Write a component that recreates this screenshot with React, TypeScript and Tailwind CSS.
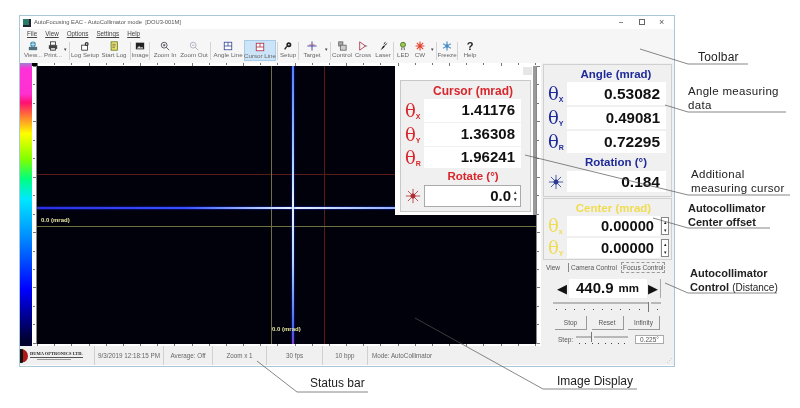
import React from "react";

const Star = ({ color }: { color: string }) => (
  <svg width="16" height="16" viewBox="0 0 18 18" stroke={color} strokeWidth="0.9">
    <path d="M9 1v16M1 9h16M3.300 3.300l11.400 11.400M14.700 3.300 3.300 14.700" />
    <circle cx="9" cy="9" r="2.400" fill={color} />
  </svg>
);

const ToolIcon = ({ name }: { name: string }) => {
  const size = "w-[10px] h-[10px]";
  switch (name) {
    case "view":
      return (
        <svg viewBox="0 0 12 12" className={size}>
          <circle cx="6" cy="4" r="3.400" fill="#3b8fb0" />
          <rect x="1" y="7" width="10" height="4" fill="#4f6f7f" />
          <path d="M3 4h6M6 1v6" stroke="#d5eef5" />
        </svg>
      );
    case "print":
      return (
        <svg viewBox="0 0 12 12" className={size}>
          <rect x="3" y="1" width="6" height="4" fill="#fff" stroke="#333" />
          <rect x="1" y="5" width="10" height="4.500" fill="#444" />
          <rect x="3" y="8" width="6" height="3" fill="#ddd" stroke="#333" />
        </svg>
      );
    case "logsetup":
      return (
        <svg viewBox="0 0 12 12" className={size}>
          <rect x="2" y="5" width="7" height="6" fill="#fff" stroke="#333" />
          <circle cx="8" cy="3.500" r="2.400" fill="#333" />
          <circle cx="8" cy="3.500" r="0.900" fill="#fff" />
        </svg>
      );
    case "startlog":
      return (
        <svg viewBox="0 0 12 12" className={size}>
          <rect x="2.500" y="1" width="7.500" height="10" fill="#f2e46a" stroke="#5a7a20" />
          <path d="M4 4h4M4 6h4M4 8h3" stroke="#555" strokeWidth="0.800" />
        </svg>
      );
    case "image":
      return (
        <svg viewBox="0 0 12 12" className={size}>
          <rect x="1" y="2" width="10" height="8" fill="#222" />
          <path d="M2 9l3-3 2 2 1.500-1L10 9z" fill="#ddd" />
        </svg>
      );
    case "zoomin":
    case "zoomout": {
      const c = name === "zoomin" ? "#445" : "#aab";
      return (
        <svg viewBox="0 0 12 12" className={size} fill="none" stroke={c}>
          <circle cx="5" cy="5" r="3.500" />
          <path d="M7.500 7.500 11 11M3.500 5h3" />
          {name === "zoomin" && <path d="M5 3.500v3" />}
        </svg>
      );
    }
    case "angle":
    case "cursor": {
      const c = name === "angle" ? "#3a4a9a" : "#b03048";
      return (
        <svg viewBox="0 0 12 12" className={size} fill="none" stroke={c}>
          <rect x="1.500" y="1.500" width="9" height="9" fill="#fff" />
          <path d="M1.500 6h9M6 1.500v4.500" />
        </svg>
      );
    }
    case "setup":
      return (
        <svg viewBox="0 0 12 12" className={size}>
          <circle cx="7" cy="4.500" r="3" fill="#222" />
          <circle cx="7" cy="4.500" r="1" fill="#fff" />
          <path d="M4.500 6.500 2 10" stroke="#222" strokeWidth="1.600" />
        </svg>
      );
    case "target":
      return (
        <svg viewBox="0 0 12 12" className={size} stroke="#3a40a0" strokeWidth="1.100">
          <path d="M6 0.500v11M0.500 6h11" />
          <path d="M2.500 4.500h7" stroke="#b03048" strokeWidth="0.600" />
        </svg>
      );
    case "control":
      return (
        <svg viewBox="0 0 12 12" className={size}>
          <rect x="2" y="1" width="5" height="5" fill="#aaa" stroke="#666" />
          <rect x="4" y="5" width="7" height="6" fill="#ccc" stroke="#666" />
        </svg>
      );
    case "cross":
      return (
        <svg viewBox="0 0 12 12" className={size} fill="none" stroke="#b03048">
          <path d="M2 1v10M2 1l7 5-7 5" />
          <path d="M7 6h4" stroke="#666" />
        </svg>
      );
    case "laser":
      return (
        <svg viewBox="0 0 12 12" className={size}>
          <path d="M3 11l3-5 3-1-2 3z" fill="#222" />
          <path d="M7 4l2-3M8 5l3-2" stroke="#222" />
        </svg>
      );
    case "led":
      return (
        <svg viewBox="0 0 12 12" className={size}>
          <circle cx="6" cy="4.500" r="3" fill="#9acb50" stroke="#4a6a20" />
          <path d="M4.500 8v3M7.500 8v3" stroke="#444" />
        </svg>
      );
    case "cw":
      return (
        <svg viewBox="0 0 18 18" className={size}>
          <path d="M9 1v16M1 9h16M3.300 3.300l11.400 11.400M14.700 3.300 3.300 14.700" stroke="#e0402c" strokeWidth="2" />
        </svg>
      );
    case "freeze":
      return (
        <svg viewBox="0 0 18 18" className={size}>
          <path d="M9 1v16M2 5l14 8M16 5 2 13" stroke="#5a9ad0" strokeWidth="2.400" />
          <circle cx="9" cy="9" r="3" fill="#4a8ac0" />
        </svg>
      );
    default:
      return <span className="h-[10px] text-[11px] leading-[10px] font-bold text-[#222]">?</span>;
  }
};

const tools: { id: string; label: string; w: number; active?: boolean; sep?: boolean; caret?: number }[] = [
  { id: "view", label: "View...", w: 22 },
  { id: "print", label: "Print...", w: 18, caret: 6, sep: true },
  { id: "logsetup", label: "Log Setup", w: 28 },
  { id: "startlog", label: "Start Log", w: 30, sep: true },
  { id: "image", label: "Image", w: 16, sep: true },
  { id: "zoomin", label: "Zoom In", w: 28 },
  { id: "zoomout", label: "Zoom Out", w: 30, sep: true },
  { id: "angle", label: "Angle Line", w: 32 },
  { id: "cursor", label: "Cursor Line", w: 32, active: true, sep: true },
  { id: "setup", label: "Setup", w: 18, sep: true },
  { id: "target", label: "Target", w: 24, caret: 5, sep: true },
  { id: "control", label: "Control", w: 20 },
  { id: "cross", label: "Cross", w: 22 },
  { id: "laser", label: "Laser", w: 18, sep: true },
  { id: "led", label: "LED", w: 16 },
  { id: "cw", label: "CW", w: 18, caret: 6, sep: true },
  { id: "freeze", label: "Freeze", w: 18, sep: true },
  { id: "help", label: "Help", w: 22 },
];

const Toolbar = () => (
  <div className="h-[24px] flex items-start pl-[2px] pt-px bg-[#f6f6f6]">
    {tools.map((t) => (
      <React.Fragment key={t.id}>
        <div
          className={`h-[21px] pt-px flex flex-col items-center shrink-0 text-[6.200px] leading-[7px] text-[#666] ${
            t.active ? "bg-[#cce4f7] border border-[#a8cce8]" : ""
          }`}
          style={{ width: t.w }}
        >
          <ToolIcon name={t.id} />
          <span className="whitespace-nowrap">{t.label}</span>
        </div>
        {t.caret && (
          <span className="shrink-0 pt-[6px] text-center text-[5px] text-[#444]" style={{ width: t.caret }}>
            ▾
          </span>
        )}
        {t.sep && <span className="w-px h-[18px] mt-[2px] mx-px shrink-0 bg-[#d4d4d4]" />}
      </React.Fragment>
    ))}
  </div>
);

const Ticks = ({ n, vertical }: { n: number; vertical?: boolean }) => (
  <div className={`flex justify-between ${vertical ? "flex-col h-full" : "w-full"}`}>
    {Array.from({ length: n }).map((_, i) => (
      <span
        key={i}
        className={`bg-[#777] ${vertical ? "h-px" : "w-px"} ${
          vertical ? (i % 3 === 0 ? "w-[3px]" : "w-[2px]") : i % 3 === 0 ? "h-[3px]" : "h-[2px]"
        }`}
      />
    ))}
  </div>
);

const Theta = ({ sub, color }: { sub: string; color: string }) => (
  <span className="w-[23px] h-[18px] shrink-0 pl-[4px] flex items-end" style={{ color }}>
    <span className="text-[18px] leading-[18px] [font-family:'DejaVu_Serif',serif]">θ</span>
    <span className="text-[7px] leading-[7px] font-bold">{sub}</span>
  </span>
);

const Spinner = () => (
  <div className="w-[8px] h-[18px] ml-px mr-[2px] border border-[#888] bg-white flex flex-col items-center justify-between text-[5px] leading-[8px] text-[#222]">
    <span>▴</span>
    <span>▾</span>
  </div>
);

const Readout = ({
  sub,
  value,
  color,
  h,
  size,
  gap = "mb-[2px]",
  spin,
}: {
  sub: string;
  value: string;
  color: string;
  h: string;
  size: string;
  gap?: string;
  spin?: boolean;
}) => (
  <div className={`flex items-center ${gap}`}>
    <Theta sub={sub} color={color} />
    <div className={`${h} flex-1 bg-white flex items-center justify-end pr-[6px] font-bold text-[#111] ${size}`}>{value}</div>
    {spin && <Spinner />}
  </div>
);

const TinySlider = ({ w, thumb, ticks }: { w: string; thumb: string; ticks: number }) => (
  <div className={`${w} relative h-[14px]`}>
    <div className="h-[2px] mt-[4px] bg-[#b8b8b8]" />
    <div className={`absolute top-0 ${thumb} w-[3px] h-[10px] bg-[#f0f0f0] border-l border-[#777]`} />
    <div className="mt-[5px] flex justify-between px-[3px]">
      {Array.from({ length: ticks }).map((_, i) => (
        <span key={i} className="w-px h-px bg-[#444]" />
      ))}
    </div>
  </div>
);

const CursorPanel = () => (
  <div className="absolute left-[358px] top-0 w-[141px] h-[149px] bg-white pl-[5px] pt-[14px] pr-[2px] border-r-[3px] border-[#9a9a9a]">
    <div className="absolute right-[1px] top-[1px] w-[9px] h-[8px] bg-[#e6e6e6]" />
    <div className="h-[132px] border border-[#c8c8c8] bg-[#f0f0f0] pt-[3px] pr-[9px]">
      <div className="text-center text-[12px] leading-[14px] font-bold text-[#d8262c] pl-[24px] mb-[1px]">Cursor (mrad)</div>
      <Readout sub="X" value="1.41176" color="#d8262c" h="h-[23px]" size="text-[15px]" gap="mb-px" />
      <Readout sub="Y" value="1.36308" color="#d8262c" h="h-[23px]" size="text-[15px]" gap="mb-px" />
      <Readout sub="R" value="1.96241" color="#d8262c" h="h-[21px]" size="text-[15px]" gap="mb-0" />
      <div className="text-center text-[11.500px] leading-[17px] font-bold text-[#d8262c] pl-[24px]">Rotate (°)</div>
      <div className="flex items-center">
        <span className="w-[23px] pl-[4px] shrink-0">
          <Star color="#b02a30" />
        </span>
        <div className="flex-1 h-[22px] bg-white border border-[#aaa] flex items-center justify-end font-bold text-[15px] text-[#111]">
          0.0
          <span className="w-[7px] mx-px flex flex-col items-center text-[5px] leading-[7px] text-[#333]">
            <span>▴</span>
            <span>▾</span>
          </span>
        </div>
      </div>
    </div>
  </div>
);

const ImageArea = () => (
  <div className="w-[509px] grid grid-cols-[5px_499px_5px] grid-rows-[3px_278px_2px] bg-white">
    <div className="bg-black" />
    <div className="overflow-hidden">
      <Ticks n={30} />
    </div>
    <div className="bg-white" />
    <div className="border-r border-[#888] flex justify-end">
      <Ticks n={16} vertical />
    </div>
    <div className="relative bg-[#01010b] overflow-hidden">
      <div className="absolute left-0 right-0 top-[108px] h-px bg-[#5a1a1a]" />
      <div className="absolute top-0 bottom-0 left-[287px] w-px bg-[#5a1a1a]" />
      <div className="absolute left-0 right-0 top-[160px] h-px bg-[#707040]" />
      <div className="absolute top-0 bottom-0 left-[234px] w-px bg-[#707040]" />
      <div className="absolute left-0 right-0 top-[141px] h-[2px] bg-[linear-gradient(90deg,#2a30e0,#3a50ff_30%,#98b8ff_42%,#e8f4ff_51%,#a8c8ff_65%,#3a50ff)] shadow-[0_0_2px_#2030ff]" />
      <div className="absolute top-0 bottom-0 left-[255px] w-[2px] bg-[linear-gradient(180deg,#5080ff,#b8e0ff_40%,#e8f4ff_50%,#b0d8ff_70%,#4060f0_95%,#8040c0)] shadow-[0_0_2px_#2030ff]" />
      <span className="absolute left-[4px] top-[150px] text-[6px] font-bold text-[#e8e8a0]">0.0 (mrad)</span>
      <span className="absolute left-[235px] top-[259px] text-[6px] font-bold text-[#e8e8a0]">0.0 (mrad)</span>
      <CursorPanel />
    </div>
    <div className="border-l border-[#888]">
      <Ticks n={16} vertical />
    </div>
    <div />
    <div className="overflow-hidden">
      <Ticks n={30} />
    </div>
    <div />
  </div>
);

const RightPanel = () => (
  <div className="w-[133px] h-[284px] bg-[#f0f0f0] px-[2px] pt-px border-b border-[#c4c4c4] text-[#555]">
    <div className="h-[133px] border border-[#d0d0d0] pt-[3px] pr-[5px]">
      <div className="text-center text-[11.500px] leading-[13px] font-bold text-[#1f2a9a] pl-[22px] mb-px">Angle (mrad)</div>
      <Readout sub="X" value="0.53082" color="#1f2a9a" h="h-[23px]" size="text-[15.500px]" gap="mb-[2px]" />
      <Readout sub="Y" value="0.49081" color="#1f2a9a" h="h-[22px]" size="text-[15px]" gap="mb-[2px]" />
      <Readout sub="R" value="0.72295" color="#1f2a9a" h="h-[22px]" size="text-[15.500px]" gap="mb-0" />
      <div className="text-center text-[11.500px] leading-[18px] font-bold text-[#1f2a9a] pl-[22px]">Rotation (°)</div>
      <div className="flex items-center">
        <span className="w-[23px] pl-[4px] shrink-0">
          <Star color="#2a3a90" />
        </span>
        <div className="flex-1 h-[21px] bg-white flex items-center justify-end pr-[6px] font-bold text-[15.500px] text-[#111]">0.184</div>
      </div>
    </div>
    <div className="h-[62px] mt-px border border-[#d0d0d0] pt-[3px]">
      <div className="text-center text-[11.500px] leading-[13px] font-bold text-[#f0dc50] pl-[12px] mb-px">Center (mrad)</div>
      <Readout sub="x" value="0.00000" color="#f0dc50" h="h-[20px]" size="text-[14.700px]" gap="mb-[2px]" spin />
      <Readout sub="Y" value="0.00000" color="#f0dc50" h="h-[20px]" size="text-[14.700px]" gap="mb-0" spin />
    </div>
    <div className="flex items-center h-[11px] mt-[2px] text-[6.500px] leading-[9px] whitespace-nowrap">
      <span className="pl-[3px] w-[25px]">View</span>
      <span className="pl-[2px] w-[53px] border-l border-[#888]">Camera Control</span>
      <span className="h-[11px] px-px border border-dashed border-[#999]">Focus Control</span>
    </div>
    <div className="flex items-center justify-center h-[19px] mt-[6px]">
      <span className="w-[14px] text-center text-[13px] text-[#111]">◀</span>
      <div className="w-[78px] h-[19px] bg-white flex items-center justify-center gap-[5px] font-bold text-[#111]">
        <span className="text-[15px]">440.9</span>
        <span className="text-[11.500px]">mm</span>
      </div>
      <span className="w-[14px] text-center text-[13px] text-[#111] border-r border-[#aaa]">▶</span>
    </div>
    <div className="pl-[10px]">
      <TinySlider w="w-[108px]" thumb="left-[95px]" ticks={12} />
    </div>
    <div className="flex justify-between px-[12px]">
      {["Stop", "Reset", "Infinity"].map((b) => (
        <div key={b} className="w-[32px] h-[14px] flex items-center justify-center text-[6.500px] border-r border-b border-[#999]">
          {b}
        </div>
      ))}
    </div>
    <div className="flex items-start pl-[15px] mt-[2px] text-[6.500px] leading-[9px]">
      <span className="w-[18px] mt-[3px]">Step:</span>
      <TinySlider w="w-[52px]" thumb="left-[15px]" ticks={8} />
      <span className="ml-[7px] mt-[3px] w-[29px] h-[9px] leading-[8px] text-center bg-white border border-[#aaa]">0.225°</span>
    </div>
  </div>
);

const StatusBar = () => (
  <div className="h-[19px] flex items-center bg-[#f0f0f0] text-[6.300px] text-[#666] relative">
    <div className="w-[74px] h-full flex items-center shrink-0">
      <span className="w-[8px] h-[14px] bg-[#b01818] border-l-[3px] border-[#111] rounded-r-full" />
      <div className="ml-[2px]">
        <div className="text-[4.500px] leading-[6px] font-bold text-[#222] border-b border-[#555] whitespace-nowrap [font-family:'Liberation_Serif',serif]">
          DUMA OPTRONICS LTD.
        </div>
        <div className="ml-[7px] mt-px w-[34px] h-px bg-[#999]" />
      </div>
    </div>
    {[
      ["w-[69px] justify-center", "9/3/2019 12:18:15 PM"],
      ["w-[49px] justify-center", "Average: Off"],
      ["w-[54px] justify-center", "Zoom x 1"],
      ["w-[56px] justify-center", "30 fps"],
      ["w-[45px] justify-center", "10 bpp"],
      ["w-[70px] pl-[4px]", "Mode: AutoCollimator"],
    ].map(([w, text]) => (
      <div key={text} className={`${w} h-full flex items-center border-l border-[#d0d0d0] whitespace-nowrap shrink-0`}>
        {text}
      </div>
    ))}
    <span className="absolute right-[2px] bottom-[2px] text-[5px] leading-none text-[#aaa]">⋰</span>
  </div>
);

const Callouts = () => (
  <>
    <svg className="absolute inset-0 pointer-events-none" width="800" height="408" fill="none" stroke="#555" strokeWidth="0.700">
      <path d="M640 49 688 64H748" />
      <path d="M665 105 688 112H786" />
      <path d="M525 155 688 195H790" />
      <path d="M653 218 688 228H770" />
      <path d="M665 283 688 293H777" />
      <path d="M415 318 543 389H637" />
      <path d="M257 361 297 392H368" />
    </svg>
    <div className="absolute left-[698px] top-[50px] text-[12px] leading-[14px] tracking-[0.2px] text-[#222]">Toolbar</div>
    <div className="absolute left-[688px] top-[84px] text-[11.500px] leading-[14px] tracking-[0.3px] text-[#222]">
      Angle measuring
      <br />
      data
    </div>
    <div className="absolute left-[691px] top-[167px] text-[11.500px] leading-[14px] tracking-[0.3px] text-[#222]">
      Additional
      <br />
      measuring cursor
    </div>
    <div className="absolute left-[688px] top-[201px] text-[11px] leading-[14px] font-bold text-[#222]">
      Autocollimator
      <br />
      Center offset
    </div>
    <div className="absolute left-[690px] top-[266px] text-[11px] leading-[14px] font-bold text-[#222] whitespace-nowrap">
      Autocollimator
      <br />
      Control <span className="font-normal text-[10px]">(Distance)</span>
    </div>
    <div className="absolute left-[557px] top-[374px] text-[12px] leading-[14px] text-[#222]">Image Display</div>
    <div className="absolute left-[310px] top-[376px] text-[12px] leading-[14px] text-[#222]">Status bar</div>
  </>
);

export default function App() {
  return (
    <div className="relative w-[800px] h-[408px] overflow-hidden bg-white pl-[19px] pt-[15px] blur-[0.4px] [font-family:'Liberation_Sans',sans-serif]">
      <div className="w-[656px] h-[352px] border border-[#a8c8d8] bg-white flex flex-col">
        <div className="h-[13px] flex items-center pl-[3px] text-[5.800px] text-[#555] relative">
          <span className="w-[8px] h-[8px] mr-[3px] bg-[#2a7a6a] border-r-2 border-b-2 border-[#223]" />
          AutoFocusing EAC - AutoCollimator mode&nbsp; [DOU3-001M]
          <span className="absolute left-[599px] top-[6px] w-[4px] h-px bg-[#888]" />
          <span className="absolute left-[619px] top-[3px] w-[6px] h-[6px] border border-[#666]" />
          <span className="absolute left-[639px] top-[-1px] text-[9px] leading-[14px] text-[#555]">×</span>
        </div>
        <div className="h-[10px] flex items-center gap-[8px] pl-[7px] bg-[#f6f6f6] text-[6.300px] text-[#444]">
          <span className="underline">File</span>
          <span className="underline">View</span>
          <span className="underline">Options</span>
          <span className="underline">Settings</span>
          <span className="underline">Help</span>
        </div>
        <Toolbar />
        <div className="flex h-[283px]">
          <div className="w-[12px] bg-[linear-gradient(180deg,#a080d0_0,#ff30d8_2%,#ff30d0_11%,#ff1070_14%,#ff8030_19%,#ffff00_25%,#80ff00_34%,#00ff80_41%,#00e8ff_48%,#0090ff_61%,#0000ff_80%,#000030_98%)]" />
          <ImageArea />
          <RightPanel />
        </div>
        <StatusBar />
      </div>
      <Callouts />
    </div>
  );
}
